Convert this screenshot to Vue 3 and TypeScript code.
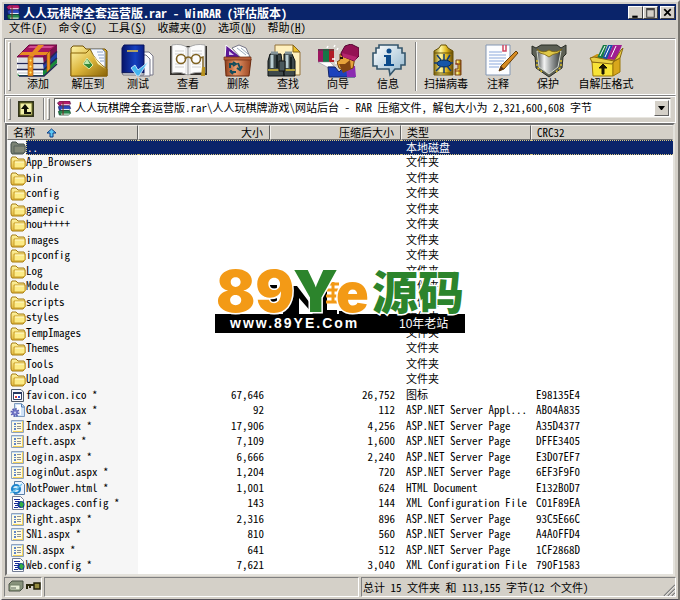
<script setup lang="ts">
import { ref } from 'vue'

interface Tool {
  icon: string
  label: string
  size?: 'wide' | 'wider'
  divided?: boolean
}

interface Entry {
  icon: string
  name: string
  size?: string
  packed?: string
  type: string
  crc?: string
}

const menus = [
  { text: '文件', key: 'F' },
  { text: '命令', key: 'C' },
  { text: '工具', key: 'S' },
  { text: '收藏夹', key: 'O' },
  { text: '选项', key: 'N' },
  { text: '帮助', key: 'H' },
]

const tools: Tool[] = [
  { icon: 'add', label: '添加' },
  { icon: 'extract', label: '解压到' },
  { icon: 'test', label: '测试' },
  { icon: 'view', label: '查看' },
  { icon: 'delete', label: '删除' },
  { icon: 'find', label: '查找' },
  { icon: 'wizard', label: '向导' },
  { icon: 'info', label: '信息' },
  { icon: 'virus', label: '扫描病毒', size: 'wide', divided: true },
  { icon: 'comment', label: '注释' },
  { icon: 'protect', label: '保护' },
  { icon: 'sfx', label: '自解压格式', size: 'wider' },
]

const folder = (name: string): Entry => ({ icon: 'folder', name, type: '文件夹' })
const page = (name: string, size: string, packed: string, crc: string): Entry => ({
  icon: 'aspx',
  name,
  size,
  packed,
  type: 'ASP.NET Server Page',
  crc,
})

const entries: Entry[] = [
  { icon: 'parent', name: '..', type: '本地磁盘' },
  ...[
    'App_Browsers', 'bin', 'config', 'gamepic', 'hou+++++', 'images', 'ipconfig', 'Log',
    'Module', 'scripts', 'styles', 'TempImages', 'Themes', 'Tools', 'Upload',
  ].map(folder),
  { icon: 'ico', name: 'favicon.ico *', size: '67,646', packed: '26,752', type: '图标', crc: 'E98135E4' },
  { icon: 'asax', name: 'Global.asax *', size: '92', packed: '112', type: 'ASP.NET Server Appl...', crc: 'AB04A835' },
  page('Index.aspx *', '17,906', '4,256', 'A35D4377'),
  page('Left.aspx *', '7,109', '1,600', 'DFFE3405'),
  page('Login.aspx *', '6,666', '2,240', 'E3D07EF7'),
  page('LoginOut.aspx *', '1,204', '720', '6EF3F9F0'),
  { icon: 'html', name: 'NotPower.html *', size: '1,001', packed: '624', type: 'HTML Document', crc: 'E132B0D7' },
  { icon: 'xml', name: 'packages.config *', size: '143', packed: '144', type: 'XML Configuration File', crc: 'C01F89EA' },
  page('Right.aspx *', '2,316', '896', '93C5E66C'),
  page('SN1.aspx *', '810', '560', 'A4A0FFD4'),
  page('SN.aspx *', '641', '512', '1CF2868D'),
  { icon: 'xml', name: 'Web.config *', size: '7,621', packed: '3,040', type: 'XML Configuration File', crc: '790F1583' },
]

const selected = ref(0)
const path = '人人玩棋牌全套运营版.rar\\人人玩棋牌游戏\\网站后台 - RAR 压缩文件, 解包大小为 2,321,600,608 字节'
</script>

<template>
  <svg class="defs" aria-hidden="true">
    <defs>
      <linearGradient id="gold" x1="0" y1="0" x2="1" y2="1">
        <stop offset="0" stop-color="#fdf3a8" /><stop offset=".5" stop-color="#dcb53a" /><stop offset="1" stop-color="#8a6408" />
      </linearGradient>
      <linearGradient id="cylinder">
        <stop offset="0" stop-color="#8a6d08" /><stop offset=".35" stop-color="#fff7a0" /><stop offset=".65" stop-color="#e0b820" /><stop offset="1" stop-color="#6a4c04" />
      </linearGradient>
      <linearGradient id="blue" x1="0" y1="0" x2="1" y2="0">
        <stop offset="0" stop-color="#06146a" /><stop offset=".6" stop-color="#1540c0" /><stop offset="1" stop-color="#0a1f86" />
      </linearGradient>
      <linearGradient id="steel">
        <stop offset="0" stop-color="#4c5050" /><stop offset=".3" stop-color="#f4f4f4" /><stop offset=".6" stop-color="#9a9e9e" /><stop offset="1" stop-color="#333838" />
      </linearGradient>
      <linearGradient id="copper">
        <stop offset="0" stop-color="#8c3a18" /><stop offset=".4" stop-color="#e89a6c" /><stop offset="1" stop-color="#9a4420" />
      </linearGradient>
      <linearGradient id="bubble" x1="0" y1="0" x2="1" y2="1">
        <stop offset="0" stop-color="#ffffff" /><stop offset="1" stop-color="#8fb4cc" />
      </linearGradient>
      <linearGradient id="yellow" x1="0" y1="0" x2="0" y2="1">
        <stop offset="0" stop-color="#fff6a4" /><stop offset="1" stop-color="#e2b63a" />
      </linearGradient>
    </defs>

    <symbol id="tool-add" viewBox="0 0 42 34">
      <path d="M26 26L40 14V19L27 32H1L0 26Z" fill="#178a3a" />
      <path d="M26 20L40 8V14L27 27Z" fill="#1c3fa8" />
      <path d="M26 13L40 1V8L27 21Z" fill="#7b1050" />
      <path d="M0 13H26V31H2L0 29Z" fill="#fff" />
      <path d="M1 15H26M1 17H26M1 22H26M1 24H26M1 29H26" stroke="#b8bcc4" />
      <path d="M0 19.5H27L40 7.5M0 25.5H27L40 14M2 32H27L40 20" fill="none" stroke="#222654" stroke-width="1.5" />
      <path d="M12 1H40L26 13H0Z" fill="#a5155f" stroke="#6b0a40" />
      <path d="M13 2H37L34 4H11Z" fill="#d04c91" />
      <path d="M21 1H27L16 13H11ZM5 8L32 8L29 11L2 11Z" fill="#e88b23" />
      <path d="M11 13H16V32H11ZM30 10L33 7V25L30 28Z" fill="#ec9220" stroke="#9a560c" stroke-width=".6" />
      <path d="M13 16h1v1h-1zM13 22h1v1h-1zM13 28h1v1h-1z" fill="#fff9a0" stroke="#fff06b" />
    </symbol>
    <symbol id="tool-extract" viewBox="0 0 42 34">
      <path d="M4 4L6 2H16L19 5H38L40 7V32H4Z" fill="url(#gold)" stroke="#715105" />
      <path d="M23 5H35L38 8V25L34 27Z" fill="#f8faff" stroke="#8090a8" />
      <path d="M30 8H36M31 11H37M32 14H37M33 17H37" stroke="#8ca4c8" />
      <path d="M4 9H19L23 5Q28 17 40 25V32H4Z" fill="url(#gold)" stroke="#8a6508" />
      <path d="M23 6Q29 17 39 25L31 20Z" fill="#fff7bf" />
      <path d="M20 14L26 21L22 25L16 20Z" fill="#348a39" stroke="#e6e9a6" /><path d="M20 15L23 20L17 20Z" fill="#bfe8ae" />
    </symbol>
    <symbol id="tool-test" viewBox="0 0 42 34">
      <path d="M22 8H32L36 12V31H22Z" fill="#fff" stroke="#778" />
      <path d="M22 11H29L33 15V32H20Z" fill="#f4f5fa" stroke="#778" />
      <path d="M5 4L7 1H27V29H5Z" fill="url(#blue)" stroke="#06125c" />
      <path d="M5 29H27V31H6Z" fill="#e4e7f0" stroke="#334" stroke-width=".6" />
      <path d="M10 7H21" stroke="#e9c645" stroke-width="1.5" />
      <path d="M14 24L18 21L21 26L31 18L22 32H20Z" fill="#44b4ee" stroke="#e2f6ff" stroke-width=".8" />
    </symbol>
    <symbol id="tool-view" viewBox="0 0 42 34">
      <path d="M3 2H40V31H3Z" fill="#33302c" />
      <path d="M5 1Q15 -1 21 4Q28 -1 38 1V29Q28 27 21 31Q14 27 5 29Z" fill="#fcfcfc" stroke="#aaa" />
      <path d="M21 4V31" stroke="#888" /><path d="M19 4V29M23 4V29" stroke="#ddd" />
      <path d="M8 7H17M8 10H17M8 20H17M8 23H17M25 7H35M25 10H35M25 20H34M25 23H34" stroke="#d0d0d0" />
      <circle cx="14" cy="15" r="4.5" fill="none" stroke="#806323" stroke-width="1.6" />
      <circle cx="29" cy="15" r="4.5" fill="none" stroke="#806323" stroke-width="1.6" />
      <path d="M18 15Q21 11 25 15M33 14L36 13V25" fill="none" stroke="#806323" stroke-width="1.5" /><path d="M35 23H38V32H34Z" fill="#b89220" />
    </symbol>
    <symbol id="tool-delete" viewBox="0 0 42 34">
      <path d="M8 14L9 1L25 14Z" fill="#5d1896" stroke="#fff" /><path d="M12 11V7L17 11Z" fill="#d8c8ec" />
      <path d="M15 4L22 1L29 4L33 13L24 14Z" fill="#fff" stroke="#778" /><path d="M20 4L29 11M24 4L31 10" stroke="#9ab" />
      <path d="M8 15H34L32 32H9Z" fill="url(#copper)" stroke="#6b2b10" />
      <path d="M7 13H34V16H7Z" fill="#b8603a" stroke="#6b2b10" stroke-width=".7" />
      <path d="M13 24V20H17M16 18L19 20L16 22M21 19L23 24M25 22L23 26L20 24M19 28H14V26M16 30L13 27" fill="none" stroke="#174d5c" stroke-width="2" />
    </symbol>
    <symbol id="tool-find" viewBox="0 0 42 34">
      <path d="M8 1H26L33 8V31H8Z" fill="#fff0bd" stroke="#94733a" /><path d="M26 1V8H33Z" fill="#ecc02b" stroke="#84631b" />
      <path d="M3 10H14L17 32H1V17ZM17 10H25L28 17V32H17Z" fill="#3d484a" stroke="#0c1112" />
      <path d="M5 11V24M20 11V24" stroke="#b9cdd2" stroke-width="3" /><path d="M10 11V24M24 13V26" stroke="#172021" stroke-width="2" />
      <path d="M1 26H12M17 26H28" stroke="#d9bf36" stroke-width="1.5" /><path d="M12 17H18V27H12Z" fill="#4a585c" stroke="#111" />
      <path d="M4 9H11M18 9H25" stroke="#839398" stroke-width="3" />
    </symbol>
    <symbol id="tool-wizard" viewBox="0 0 42 34">
      <path d="M1 5H6V18H1Z" fill="#9c1760" /><path d="M6 5H12V18H6Z" fill="#177547" /><path d="M12 5H17V18H12Z" fill="#b01c26" />
      <path d="M1 6H17" stroke="#444" /><path d="M1 18H13L17 22L10 23Z" fill="#fff" stroke="#889" stroke-width=".5" />
      <path d="M11 23H18L22 28L28 22L38 33H12Z" fill="#1c42bd" stroke="#102266" /><path d="M29 22L38 22L39 33H30Z" fill="#8b2bb1" />
      <path d="M23 10L31 13L38 13L36 24L28 27L22 24L20 18L23 16Z" fill="#e7a33a" stroke="#754006" /><path d="M22 20L28 20L33 16L34 25L26 29Z" fill="#824511" /><path d="M23 13h3v2h-3z" fill="#221308" />
      <path d="M24 9L28 2L34 0L42 4L42 12L37 17L25 12Z" fill="#941254" stroke="#560632" /><path d="M25 9L40 13L38 17L26 13Z" fill="#b5246f" />
      <path d="M10 4L11 2M17 3L18 1M20 6L21 4M15 15H18M18 19H20" stroke="#fff" stroke-width="1.5" />
    </symbol>
    <symbol id="tool-info" viewBox="0 0 42 34">
      <path d="M12 4V1H31V4H35V9H38V21H34V25H28L23 31L22 25H10V22H6V9H9V4Z" fill="url(#bubble)" stroke="#35566c" stroke-width="1.6" />
      <circle cx="22" cy="7" r="2.5" fill="#0b4a8a" /><path d="M17 11H24V20H27V22H17V20H19V13H17Z" fill="#0b4a8a" />
    </symbol>
    <symbol id="tool-virus" viewBox="0 0 42 34">
      <path d="M14 4L16 1H21L23 4L28 7V31H9V7Z" fill="url(#cylinder)" stroke="#665005" /><path d="M9 9H28M9 29H28" stroke="#685207" />
      <path d="M31 16H36V31H30V25H33V20H31Z" fill="url(#cylinder)" stroke="#7c4215" /><path d="M30 20H36M30 27H36" stroke="#8c341c" />
      <ellipse cx="19" cy="19.5" rx="7" ry="3.5" fill="#1556a8" stroke="#06264e" /><path d="M12 11L16 16M19 10V16M25 11L22 16M11 27L16 22M19 29V23M26 27L22 22M9 19H13M25 19H28" stroke="#123d76" stroke-width="1.5" />
    </symbol>
    <symbol id="tool-comment" viewBox="0 0 42 34">
      <path d="M9 1H33V31H9Z" fill="#fcfdff" stroke="#8397b4" /><path d="M12 8H25M12 11H29M12 14H29M12 17H27M12 20H25M12 23H22" stroke="#8ca9dc" />
      <path d="M26 1V7H29V1" fill="none" stroke="#ce4560" stroke-width="1.5" /><path d="M22 27L24 22L39 7L41 9L27 25Z" fill="#d78b22" stroke="#684009" /><path d="M22 27L24 22L27 25Z" fill="#543018" />
    </symbol>
    <symbol id="tool-protect" viewBox="0 0 42 34">
      <path d="M5 2L9 4L14 1H30L34 4L39 1V10L36 13L35 24L22 33L9 24L8 13L5 10Z" fill="#5d6055" stroke="#292c25" />
      <path d="M10 7L22 11L34 7L31 23L22 30L12 23Z" fill="url(#steel)" stroke="#d4d9cd" />
      <path d="M10 5Q16 10 22 6Q28 10 35 5L31 9Q25 10 22 13Q18 10 13 9Z" fill="#e0c848" stroke="#77600c" stroke-width=".8" />
      <path d="M10 16V23L15 28M34 16V23L29 28" fill="none" stroke="#d7bb24" stroke-dasharray="2 2" stroke-width="1.5" />
    </symbol>
    <symbol id="tool-sfx" viewBox="0 0 42 34">
      <path d="M5 14L12 10L36 12L32 18L33 29L27 32H9L7 19Z" fill="#cb9413" />
      <path d="M12 14L18 1H22L17 16Z" fill="#157c46" /><path d="M17 15L23 1H28L22 17Z" fill="#1751a8" /><path d="M22 15L28 1H37L31 16Z" fill="#a01d91" /><path d="M15 12L20 2M20 13L25 2M26 13L31 2" stroke="#fff" />
      <path d="M7 18L28 18V32H8Z" fill="#f8e337" stroke="#9b7809" /><path d="M28 18L35 14V28L28 32Z" fill="#d8a71c" stroke="#9b7809" /><path d="M5 14L9 13L29 17L27 20L7 18ZM29 17L36 6L38 4L35 14Z" fill="#ead044" stroke="#886813" />
      <path d="M17 30V24H14L18 20L22 24H19V30Z" fill="#1b1605" stroke="#1b1605" />
    </symbol>

    <symbol id="rar" viewBox="0 0 16 16">
      <path d="M1 2L4 0H14L15 3L13 5H3Z" fill="#b51d6c" stroke="#4d0935" stroke-width=".7" /><path d="M2 6L5 5H14L15 8L13 10H3Z" fill="#2d49bd" stroke="#111c5c" stroke-width=".7" /><path d="M2 11L5 10H14L15 13L13 15H3Z" fill="#25874c" stroke="#0c4021" stroke-width=".7" />
      <path d="M5 4H14M5 9H14M5 14H14" stroke="#fff" /><path d="M6 1H8V15H6Z" fill="#79312a" opacity=".55" />
    </symbol>
    <symbol id="file-folder" viewBox="0 0 16 15">
      <path d="M1 4L2 2H6L8 4H14L15 6V12L13 14H2L1 12Z" fill="url(#yellow)" stroke="#a37b13" /><path d="M4 13V6H15V12L13 13Z" fill="#fceb86" stroke="#c99e28" /><path d="M5 7H14" stroke="#fffbd0" />
    </symbol>
    <symbol id="file-parent" viewBox="0 0 16 15">
      <path d="M1 4L2 2H6L8 4H14L15 6V12L13 14H2L1 12Z" fill="#7b8374" stroke="#44504b" /><path d="M4 13V6H15V12L13 13Z" fill="#848a78" stroke="#56605b" />
    </symbol>
    <symbol id="file-ico" viewBox="0 0 16 15">
      <path d="M1.5 1.5H11L13.5 4V13.5H1.500Z" fill="#f4f6fa" stroke="#4e5866" /><path d="M3.500 4.500H11.500V11.500H3.500Z" fill="#fff" stroke="#344264" /><path d="M3 5H12" stroke="#253760" stroke-width="2" /><path d="M5 8h2v2H5z" fill="#d23b36" /><path d="M8 8h2v2H8z" fill="#3552ce" />
    </symbol>
    <symbol id="file-asax" viewBox="0 0 16 15">
      <path d="M4.500 .5H11.500L14.500 3.500V13.500H4.500Z" fill="#cfe2f7" stroke="#7f9cc0" /><path d="M6 2H11V12H8Z" fill="#fff" /><path d="M11.500 1V4H14.500" fill="none" stroke="#527bb0" /><circle cx="5" cy="9.500" r="3" fill="#7074c4" /><circle cx="5" cy="9.500" r="3.500" fill="none" stroke="#5a5fb4" stroke-width="2" stroke-dasharray="1.500 1.200" /><circle cx="5" cy="9.500" r="1" fill="#d5d7f6" />
    </symbol>
    <symbol id="file-aspx" viewBox="0 0 16 15">
      <path d="M1.500 1.500H13.500V13.500H1.500Z" fill="#fffbe0" stroke="#8ea2bc" /><path d="M2 2.500H13" stroke="#c3dcf6" /><path d="M12.500 2V13M3 12.500H13" stroke="#f2d05c" />
      <path d="M4 4h2v2H4zM4 7h2v1H4zM4 9h2v2H4z" fill="#5f86c8" /><path d="M7 4.500H11M7 7.500H11M7 9.500H11" stroke="#8b8f96" />
    </symbol>
    <symbol id="file-html" viewBox="0 0 16 15">
      <path d="M4.500 .5H11.500L14.500 3.500V13.500H4.500Z" fill="#e7f2ff" stroke="#5b7ea5" /><circle cx="6" cy="8" r="4" fill="#d6eefb" stroke="#2086cc" stroke-width="2.200" /><path d="M3 8H10" stroke="#2086cc" stroke-width="1.600" /><path d="M0 12Q4 11 12 3" fill="none" stroke="#6bc5ef" stroke-width="1.200" />
    </symbol>
    <symbol id="file-xml" viewBox="0 0 16 15">
      <path d="M2.500 .5H10.500L13.500 3.500V13.500H2.500Z" fill="#fff" stroke="#727c92" /><path d="M4 3.500H10M5 5.500H9M4 7.500H8M5 9.500H8M4 11.500H8" stroke="#182b94" /><circle cx="11" cy="8.500" r="3.500" fill="#12349a" /><path d="M11 5L14 8L12 12L9 9Z" fill="#35ae42" />
    </symbol>
  </svg>

  <main class="window">
    <header class="title-bar">
      <svg class="app-icon"><use href="#rar" /></svg>
      <h1>人人玩棋牌全套运营版.rar - WinRAR (评估版本)</h1>
      <div class="controls">
        <button type="button" aria-label="最小化"><svg viewBox="0 0 12 11"><path d="M3 8H8V10H3Z" /></svg></button>
        <button type="button" aria-label="最大化"><svg viewBox="0 0 12 11"><path d="M2 1H10V10H2ZM3 3V9H9V3Z" fill="#404040" fill-rule="evenodd" /></svg></button>
        <button type="button" aria-label="关闭"><svg viewBox="0 0 12 11"><path d="M3 2L9 8M9 2L3 8" stroke="#000" stroke-width="1.6" /></svg></button>
      </div>
    </header>

    <nav class="menu">
      <button v-for="m in menus" :key="m.key" type="button">{{ m.text }}(<u>{{ m.key }}</u>)</button>
    </nav>

    <section class="toolbar">
      <i class="grip"></i>
      <template v-for="t in tools" :key="t.icon">
        <i v-if="t.divided" class="divider"></i>
        <button type="button" class="tool" :class="t.size">
          <svg><use :href="'#tool-' + t.icon" /></svg>
          <span>{{ t.label }}</span>
        </button>
      </template>
    </section>

    <section class="address">
      <i class="grip"></i>
      <button type="button" class="up" aria-label="向上一级">
        <svg viewBox="0 0 16 16"><path d="M0 0H16V16H0Z" fill="#33351c" /><path d="M2 2H14V14H2Z" fill="#f2f0a8" stroke="#6f7028" /><path d="M3 8L7 3L11 8H9V11H13V13H6V8Z" fill="#101008" /></svg>
      </button>
      <i class="divider"></i>
      <i class="grip"></i>
      <div class="combo">
        <svg class="app-icon"><use href="#rar" /></svg>
        <select aria-label="路径"><option>{{ path }}</option></select>
        <span class="drop"><svg viewBox="0 0 7 4"><path d="M0 0H7L4 4H3Z" /></svg></span>
      </div>
    </section>

    <section class="list">
      <table>
        <colgroup>
          <col class="c-name" /><col class="c-size" /><col class="c-packed" /><col class="c-type" /><col />
        </colgroup>
        <thead>
          <tr>
            <th>名称<svg class="sort" viewBox="0 0 11 10"><path d="M5.5 1L10 5H7V9H4V5H1Z" fill="#5cc8f4" stroke="#0a3a86" /></svg></th>
            <th class="num">大小</th>
            <th class="num">压缩后大小</th>
            <th>类型</th>
            <th>CRC32</th>
          </tr>
        </thead>
        <tbody>
          <tr v-for="(e, i) in entries" :key="e.name" :class="{ selected: i === selected }" @click="selected = i">
            <td class="name"><div><svg><use :href="'#file-' + e.icon" /></svg><span>{{ e.name }}</span></div></td>
            <td class="num">{{ e.size }}</td>
            <td class="num">{{ e.packed }}</td>
            <td>{{ e.type }}</td>
            <td>{{ e.crc }}</td>
          </tr>
        </tbody>
      </table>

      <svg class="watermark" viewBox="0 0 250 66">
        <path d="M52 17H62V38H52ZM66 18H82L101 43V17H112V46H98L84 30V46H68Z" />
        <path d="M112 16H124M111 22H125M111 28H125M111 34H125M118 14V34" stroke="#f39a16" stroke-width="3" />
        <path d="M0 46H250V65H0Z" />
        <path d="M109 42H122V46H109ZM124 43H142V46H124Z" />
        <g class="brand">
          <text class="orange" x="1" y="44">89</text>
          <text class="green" x="78" y="44">Y</text>
          <text class="orange small" x="121" y="44">e</text>
          <text class="green cjk" x="157" y="41">源码</text>
        </g>
        <text class="site" x="15" y="60">www.89YE.Com</text>
        <text class="note" x="184" y="60">10年老站</text>
      </svg>
    </section>

    <footer class="status">
      <div class="icons">
        <svg viewBox="0 0 34 16">
          <path d="M2 6L5 3H16V10L13 13H2Z" fill="#87927b" stroke="#4c5548" /><path d="M3 7H13V12H3Z" fill="#e7edd7" stroke="#738069" /><path d="M4 10H9" stroke="#5d6658" />
          <path d="M19 7H28M20 8V11M23 8V10" fill="none" stroke="#29270c" stroke-width="2" /><path d="M27 5H33V11H27Z" fill="#948a3d" stroke="#222009" stroke-width="1.5" />
        </svg>
      </div>
      <div></div>
      <div class="total">
        <span>总计 15 文件夹 和 113,155 字节(12 个文件)</span>
        <svg class="resize" viewBox="0 0 12 12"><path d="M1 12L12 1M5 12L12 5M9 12L12 9" stroke="#808080" stroke-width="1.5" /><path d="M2 12L12 2M6 12L12 6M10 12L12 10" stroke="#fff" stroke-width=".6" /></svg>
      </div>
    </footer>
  </main>
</template>

<style>
body {
  background: #d4d0c8;
}
</style>

<style scoped>
* {
  box-sizing: border-box;
}
.defs {
  position: absolute;
  width: 0;
  height: 0;
}
.window {
  display: flex;
  flex-direction: column;
  min-height: 100vh;
  padding: 2px;
  background: #d4d0c8;
  border: 2px solid;
  border-color: #ece9e4 #77746e #55525a #ece9e4;
  font: 11px/15px "Noto Sans Mono CJK SC", "Liberation Mono", "Noto Sans CJK SC", monospace;
  color: #000;
}
button,
select {
  margin: 0;
  padding: 0;
  border: 0;
  background: none;
  font: inherit;
  color: inherit;
}
svg {
  display: block;
  flex: none;
}
.app-icon {
  width: 16px;
  height: 15px;
}
.title-bar {
  display: flex;
  align-items: center;
  height: 16px;
  padding: 0 1px;
  background: #0a246a;
  color: #fff;
}
h1 {
  flex: 1;
  margin: 0;
  padding-left: 2px;
  font-size: 12px;
  line-height: 15px;
  font-weight: bold;
  white-space: pre;
}
.controls {
  display: flex;
}
.controls button {
  width: 15px;
  height: 13px;
  background: #d4d0c8;
  border: 1px solid;
  border-color: #fff #404040 #404040 #fff;
}
.controls button:last-child {
  margin-left: 2px;
}
.menu {
  display: flex;
  align-items: start;
  gap: 11px;
  height: 18px;
  padding-left: 5px;
}
.toolbar,
.address {
  display: flex;
  border: 1px solid;
  border-color: #808080 #fff #fff #808080;
  box-shadow: inset 1px 1px #fff;
}
.toolbar {
  height: 57px;
  padding: 3px 0 3px 3px;
}
.grip {
  flex: none;
  width: 3px;
  border: 1px solid;
  border-color: #fff #808080 #808080 #fff;
}
.divider {
  flex: none;
  width: 2px;
  margin: 0 2px;
  border-left: 1px solid #808080;
  border-right: 1px solid #fff;
}
.tool {
  display: flex;
  flex-direction: column;
  align-items: center;
  width: 50px;
  padding-top: 2px;
}
.grip + .tool {
  margin-left: 2px;
}
.tool svg {
  width: 42px;
  height: 34px;
}
.tool span {
  line-height: 11px;
  white-space: nowrap;
}
.tool.wide {
  width: 54px;
}
.tool.wider {
  width: 66px;
}
.address {
  height: 28px;
  padding: 2px 4px 2px 3px;
}
.up {
  display: flex;
  justify-content: center;
  width: 30px;
  padding-top: 3px;
}
.up svg {
  width: 16px;
  height: 16px;
}
.combo {
  display: flex;
  flex: 1;
  align-items: center;
  min-width: 0;
  height: 20px;
  margin-left: 4px;
  padding: 0 1px;
  background: #fff;
  border: 1px solid;
  border-color: #606060 #e8e6e0 #e8e6e0 #606060;
}
.combo select {
  flex: 1;
  min-width: 0;
  height: 16px;
  padding: 0 0 1px 3px;
  appearance: none;
  outline: 0;
}
.drop {
  display: grid;
  place-items: center;
  width: 15px;
  height: 16px;
  background: #d4d0c8;
  border: 1px solid;
  border-color: #fff #606060 #606060 #fff;
  pointer-events: none;
}
.drop svg {
  width: 7px;
  height: 4px;
}
.list {
  position: relative;
  flex: 1;
  margin: 0 1px;
  background: #fff;
  border: 2px solid;
  border-color: #707070 #e4e2dc #e4e2dc #707070;
}
table {
  width: 100%;
  table-layout: fixed;
  border-collapse: separate;
  border-spacing: 0;
}
.c-name,
.c-packed {
  width: 131px;
}
.c-size {
  width: 132px;
}
.c-type {
  width: 130px;
}
th {
  height: 15px;
  padding: 0 5px;
  background: #d4d0c8;
  border: 1px solid;
  border-color: #f4f2ee #606060 #707070 #f4f2ee;
  font-weight: normal;
  line-height: 13px;
  text-align: left;
  white-space: nowrap;
}
th:last-child {
  border-right-color: #d4d0c8;
}
.sort {
  display: inline-block;
  width: 11px;
  height: 10px;
  margin-left: 11px;
  vertical-align: -1px;
}
tbody tr {
  height: 15px;
}
tbody tr:nth-child(even) {
  height: 16px;
}
td {
  padding: 0 5px;
  line-height: 13px;
  vertical-align: top;
  white-space: nowrap;
}
.num {
  padding-right: 6px;
  text-align: right;
}
.name {
  padding: 0 0 0 3px;
  background: #f6f6f6;
}
.name div {
  display: flex;
}
.name svg {
  width: 16px;
  height: 15px;
}
.name span {
  flex: 1;
}
.selected td:not(.name),
.selected .name span {
  background: #0a246a;
  color: #fff;
  border-top: 1px dotted #d8c880;
  border-bottom: 1px dotted #d8c880;
}
.selected .name span {
  border-left: 1px dotted #d8c880;
}
.watermark {
  position: absolute;
  top: 143px;
  left: 208px;
  width: 250px;
  height: 66px;
  overflow: visible;
}
.brand {
  font: 900 58px Inter, "Liberation Sans", sans-serif;
  stroke: #fff;
  stroke-width: 3px;
  paint-order: stroke;
}
.orange {
  fill: #f39a16;
}
.green {
  fill: #2c842c;
}
.small {
  font-size: 54px;
}
.cjk {
  font: 900 46px "Noto Sans CJK SC", sans-serif;
}
.site {
  font: bold 14px "Liberation Sans", sans-serif;
  fill: #fff;
  letter-spacing: 2px;
}
.note {
  font: 12px "Liberation Sans", "Noto Sans CJK SC", sans-serif;
  fill: #fff;
}
.status {
  display: grid;
  grid-template-columns: 38px 1fr 1fr;
  gap: 2px;
  height: 20px;
  margin-top: 1px;
}
.status > div {
  border: 1px solid;
  border-color: #808080 #fff #fff #808080;
}
.icons svg {
  width: 34px;
  height: 16px;
  margin-left: 2px;
}
.status .total {
  display: flex;
  align-items: end;
  justify-content: space-between;
  padding-left: 1px;
}
.total span {
  line-height: 18px;
  white-space: nowrap;
}
.resize {
  width: 12px;
  height: 12px;
}
</style>
